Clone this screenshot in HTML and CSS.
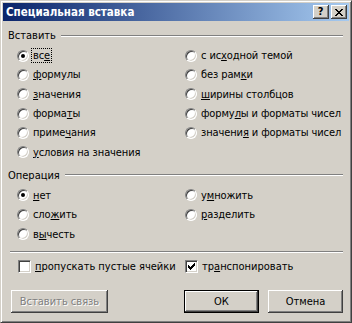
FILE: index.html
```html
<!DOCTYPE html>
<html lang="ru">
<head>
    <meta charset="UTF-8" />
    <title>Специальная вставка</title>
    <link rel="stylesheet" href="styles.css">
</head>
<body>
<div class="window">
    <div class="titlebar">
        <span class="title">Специальная вставка</span>
        <div class="title-buttons">
            <span class="tbtn tbtn-help">?</span>
            <span class="tbtn">
                <svg width="8" height="7" viewBox="0 0 8 7" shape-rendering="crispEdges">
                    <path fill="#000" d="M0 0h2v1h-2z M6 0h2v1h-2z M1 1h2v1h-2z M5 1h2v1h-2z M2 2h4v1h-4z M3 3h2v1h-2z M2 4h4v1h-4z M1 5h2v1h-2z M5 5h2v1h-2z M0 6h2v1h-2z M6 6h2v1h-2z"/>
                </svg>
            </span>
        </div>
    </div>

    <div class="content">
        <div class="group">
            <div class="group-head"><span>Вставить</span><i class="etch"></i></div>
            <div class="group-body">
                <div class="col">
                    <div class="opt"><span class="radio checked"></span><span class="focus">вс<u>е</u></span></div>
                    <div class="opt"><span class="radio"></span><span><u>ф</u>ормулы</span></div>
                    <div class="opt"><span class="radio"></span><span><u>з</u>начения</span></div>
                    <div class="opt"><span class="radio"></span><span>форма<u>т</u>ы</span></div>
                    <div class="opt"><span class="radio"></span><span>приме<u>ч</u>ания</span></div>
                    <div class="opt"><span class="radio"></span><span><u>у</u>словия на значения</span></div>
                </div>
                <div class="col">
                    <div class="opt"><span class="radio"></span><span>с ис<u>х</u>одной темой</span></div>
                    <div class="opt"><span class="radio"></span><span>без рам<u>к</u>и</span></div>
                    <div class="opt"><span class="radio"></span><span><u>ш</u>ирины столбцов</span></div>
                    <div class="opt"><span class="radio"></span><span>форму<u>л</u>ы и форматы чисел</span></div>
                    <div class="opt"><span class="radio"></span><span>значени<u>я</u> и форматы чисел</span></div>
                </div>
            </div>
        </div>

        <div class="group group-op">
            <div class="group-head"><span>Операция</span><i class="etch"></i></div>
            <div class="group-body">
                <div class="col">
                    <div class="opt"><span class="radio checked"></span><span><u>н</u>ет</span></div>
                    <div class="opt"><span class="radio"></span><span>сло<u>ж</u>ить</span></div>
                    <div class="opt"><span class="radio"></span><span>в<u>ы</u>честь</span></div>
                </div>
                <div class="col">
                    <div class="opt"><span class="radio"></span><span>у<u>м</u>ножить</span></div>
                    <div class="opt"><span class="radio"></span><span><u>р</u>азделить</span></div>
                </div>
            </div>
        </div>

        <i class="etch etch-full"></i>

        <div class="checks">
            <div class="opt"><span class="checkbox"></span><span><u>п</u>ропускать пустые ячейки</span></div>
            <div class="opt">
                <span class="checkbox">
                    <svg width="7" height="7" viewBox="0 0 7 7" shape-rendering="crispEdges">
                        <path fill="#000" d="M0 2h1v3h-1z M1 3h1v3h-1z M2 4h1v3h-1z M3 3h1v3h-1z M4 2h1v3h-1z M5 1h1v3h-1z M6 0h1v3h-1z"/>
                    </svg>
                </span>
                <span>тр<u>а</u>нспонировать</span>
            </div>
        </div>

        <div class="buttons">
            <span class="btn btn-link disabled">Вставить связь</span>
            <span class="btn btn-default">ОК</span>
            <span class="btn">Отмена</span>
        </div>
    </div>
</div>
</body>
</html>
```

FILE: styles.css
```css
:root {
    --face: #d4d0c8;
    --shadow: #808080;
    --dark: #404040;
    --light: #fff;
    --font: "DejaVu Sans Condensed", "DejaVu Sans", sans-serif;
}

html, body {
    margin: 0;
    padding: 0;
    background: var(--face);
}

.window {
    width: 352px;
    height: 323px;
    box-sizing: border-box;
    background: var(--face);
    border: 1px solid;
    border-color: var(--face) var(--dark) var(--dark) var(--face);
    box-shadow: inset 1px 1px 0 var(--light), inset -1px -1px 0 var(--shadow);
    padding: 2px;
    font-family: var(--font);
    font-size: 11px;
    color: #000;
}

/* title bar */
.titlebar {
    height: 18px;
    display: flex;
    align-items: center;
    justify-content: space-between;
    padding: 0 2px 0 3px;
    background: linear-gradient(90deg, #0a246a 0%, #a6caf0 100%);
}

.title {
    color: #fff;
    font-weight: bold;
    font-size: 11.5px;
    line-height: 18px;
}

.title-buttons {
    display: flex;
    gap: 2px;
}

.tbtn {
    width: 16px;
    height: 14px;
    box-sizing: border-box;
    display: flex;
    align-items: center;
    justify-content: center;
    background: var(--face);
    box-shadow: inset -1px -1px 0 var(--dark), inset 1px 1px 0 var(--light), inset -2px -2px 0 var(--shadow);
    font-weight: bold;
    font-size: 11px;
    line-height: 14px;
}

.tbtn-help {
    padding-right: 1px;
}

/* body */
.content {
    padding: 8px 6px 0 5px;
}

.group-head {
    display: flex;
    align-items: center;
    height: 13px;
    line-height: 13px;
}

.group-head span {
    padding-right: 5px;
}

.etch {
    display: block;
    flex: 1;
    border-top: 1px solid var(--shadow);
    border-bottom: 1px solid var(--light);
    height: 0;
}

.etch-full {
    margin: 7px 0 0 2px;
}

.group-body {
    display: grid;
    grid-template-columns: 168px 1fr;
    margin-top: 4px;
    padding-left: 9px;
}

.group-op {
    margin-top: 7px;
}

.opt {
    display: flex;
    align-items: center;
    height: 19.3px;
    white-space: nowrap;
}

.col .opt span:last-child {
    letter-spacing: -0.1px;
}

.radio {
    position: relative;
    width: 12px;
    height: 12px;
    box-sizing: border-box;
    border-radius: 50%;
    border: 1px solid;
    border-color: var(--shadow) var(--light) var(--light) var(--shadow);
    box-shadow: inset 1px 1px 0 var(--dark), inset -1px -1px 0 var(--face);
    background: #fff;
    margin-right: 4px;
    flex: none;
}

.radio.checked::after {
    content: "";
    position: absolute;
    left: 3px;
    top: 3px;
    width: 4px;
    height: 4px;
    border-radius: 50%;
    background: #000;
}

.focus {
    outline: 1px dotted #000;
    outline-offset: 0;
    padding: 0 1px;
    margin-left: -1px;
}

u {
    text-decoration-thickness: 1px;
    text-underline-offset: 1px;
}

/* checkboxes */
.checks {
    display: grid;
    grid-template-columns: 167px 1fr;
    margin-top: 4px;
    padding-left: 10px;
}

.checks .opt {
    height: 19px;
}

.checkbox {
    width: 13px;
    height: 13px;
    box-sizing: border-box;
    display: flex;
    align-items: center;
    justify-content: center;
    border: 1px solid;
    border-color: var(--shadow) var(--light) var(--light) var(--shadow);
    box-shadow: inset 1px 1px 0 var(--dark), inset -1px -1px 0 var(--face);
    background: #fff;
    margin-right: 4px;
    flex: none;
}

/* buttons */
.buttons {
    display: flex;
    margin-top: 14px;
    padding-left: 3px;
}

.btn {
    width: 75px;
    height: 23px;
    box-sizing: border-box;
    display: flex;
    align-items: center;
    justify-content: center;
    background: var(--face);
    box-shadow: inset -1px -1px 0 var(--dark), inset 1px 1px 0 var(--light), inset -2px -2px 0 var(--shadow);
}

.btn + .btn {
    margin-left: 9px;
}

.btn-link {
    width: 97px;
    margin-right: auto;
}

.btn-link + .btn {
    margin-left: 0;
}

.btn-default {
    border: 1px solid #000;
}

.disabled {
    color: var(--shadow);
    text-shadow: 1px 1px 0 var(--light);
}
```
